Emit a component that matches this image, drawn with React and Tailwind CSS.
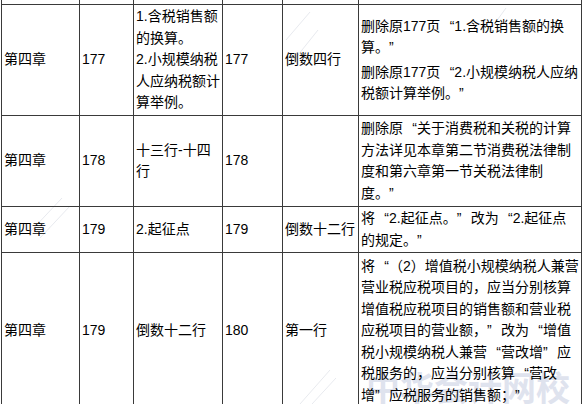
import React from 'react';

// full-width quotes like the original page's font
function Q({ c }) {
  const side = c === '“' ? 'text-right' : 'text-left';
  return <span className={`inline-block w-[14px] ${side}`}>{c}</span>;
}

const td = 'border border-[#3a3a3a] align-middle px-[2px] py-0 whitespace-nowrap';

export default function App() {
  return (
    <div className="relative w-[583px] h-[404px] overflow-hidden bg-white text-black text-[14px] leading-[21.5px] font-['Liberation_Sans','Noto_Sans_CJK_SC',sans-serif]">
      {/* faint site watermark, under the table */}
      <div className="pointer-events-none absolute z-0 left-[366px] top-[370px] text-[34px] leading-none font-bold text-[#dfe3ee] font-['Noto_Sans_CJK_SC',sans-serif]">
        中华会计网校
      </div>
      <svg className="pointer-events-none absolute z-0 left-0 top-0" width="583" height="404" viewBox="0 0 583 404">
        <g stroke="#e8eaef" strokeWidth="1" fill="none">
          <path d="M300 404 L330 370" />
          <path d="M312 404 L336 378" />
          <path d="M286 40 L310 12" />
          <path d="M294 60 L318 30" />
          <path d="M30 232 L62 198" />
          <path d="M40 238 L70 206" />
          <path d="M490 30 L506 8" />
        </g>
      </svg>

      <table className="relative z-10 table-fixed border-collapse ml-[1px] -mt-[3px] w-[580px]">
        <colgroup>
          <col className="w-[78px]" />
          <col className="w-[54px]" />
          <col className="w-[89px]" />
          <col className="w-[60px]" />
          <col className="w-[76px]" />
          <col className="w-[223px]" />
        </colgroup>
        <tbody>
          <tr className="h-[7px]">
            <td className={td}></td>
            <td className={td}></td>
            <td className={td}></td>
            <td className={td}></td>
            <td className={td}></td>
            <td className={td}></td>
          </tr>
          <tr className="h-[111px]">
            <td className={td}>第四章</td>
            <td className={td}>177</td>
            <td className={td}>
              <div>1.含税销售额</div>
              <div>的换算。</div>
              <div>2.小规模纳税</div>
              <div>人应纳税额计</div>
              <div>算举例。</div>
            </td>
            <td className={td}>177</td>
            <td className={td}>倒数四行</td>
            <td className={td}>
              <div>删除原177页<Q c="“" />1.含税销售额的换</div>
              <div>算。<Q c="”" /></div>
              <div className="mt-[3px]">删除原177页<Q c="“" />2.小规模纳税人应纳</div>
              <div>税额计算举例。<Q c="”" /></div>
            </td>
          </tr>
          <tr className="h-[91px]">
            <td className={td}>第四章</td>
            <td className={td}>178</td>
            <td className={td}>
              <div>十三行-十四</div>
              <div>行</div>
            </td>
            <td className={td}>178</td>
            <td className={td}></td>
            <td className={td}>
              <div>删除原<Q c="“" />关于消费税和关税的计算</div>
              <div>方法详见本章第二节消费税法律制</div>
              <div>度和第六章第一节关税法律制</div>
              <div>度。<Q c="”" /></div>
            </td>
          </tr>
          <tr className="h-[46px]">
            <td className={td}>第四章</td>
            <td className={td}>179</td>
            <td className={td}>2.起征点</td>
            <td className={td}>179</td>
            <td className={td}>倒数十二行</td>
            <td className={td}>
              <div>将<Q c="“" />2.起征点。<Q c="”" />改为<Q c="“" />2.起征点</div>
              <div>的规定。<Q c="”" /></div>
            </td>
          </tr>
          <tr className="h-[157px]">
            <td className={td}>第四章</td>
            <td className={td}>179</td>
            <td className={td}>倒数十二行</td>
            <td className={td}>180</td>
            <td className={td}>第一行</td>
            <td className={td}>
              <div>将<Q c="“" />（2）增值税小规模纳税人兼营</div>
              <div>营业税应税项目的，应当分别核算</div>
              <div>增值税应税项目的销售额和营业税</div>
              <div>应税项目的营业额，<Q c="”" />改为<Q c="“" />增值</div>
              <div>税小规模纳税人兼营<Q c="“" />营改增<Q c="”" />应</div>
              <div>税服务的，应当分别核算<Q c="“" />营改</div>
              <div>增<Q c="”" />应税服务的销售额；<Q c="”" /></div>
            </td>
          </tr>
        </tbody>
      </table>
    </div>
  );
}
